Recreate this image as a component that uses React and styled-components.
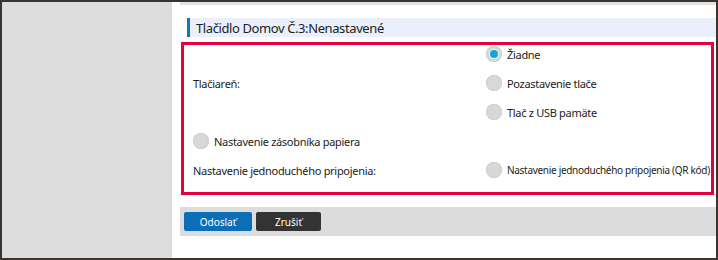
import React from "react";
import styled, { createGlobalStyle } from "styled-components";

const Global = createGlobalStyle`
  html, body { margin: 0; padding: 0; background: #fff; }
  body { font-family: "Noto Sans", "Open Sans", sans-serif; color: #222; }
  * { box-sizing: border-box; }
`;

const Frame = styled.div`
  width: 718px;
  height: 260px;
  border: 2px solid #3a3431;
  display: flex;
  overflow: hidden;
  background: #fff;
`;

const Sidebar = styled.div`
  width: 170px;
  flex: none;
  background: #dddddd;
`;

const Main = styled.div`
  flex: 1;
  display: flex;
  flex-direction: column;
  padding-left: 8px;
  min-width: 0;
`;

const TopStrip = styled.div`
  height: 3px;
  background: #e2e2e2;
`;

const TitleBar = styled.div`
  margin: 13px 0 0 7px;
  height: 19px;
  background: #e9f0fb;
  border-left: 3px solid #1b72b9;
  display: flex;
  align-items: center;
  padding-left: 6px;
  font-size: 13px;
  letter-spacing: -0.4px;
  color: #222;
  white-space: nowrap;
`;

const FormBox = styled.div`
  margin: 5px 2px 0 1px;
  height: 153px;
  border: 3px solid #e3003c;
  padding: 0 0 0 9px;
  display: grid;
  grid-template-columns: 293px 1fr;
  grid-auto-rows: 18px;
  row-gap: 11px;
  font-size: 11px;
  letter-spacing: -0.3px;
  color: #222;
  overflow: hidden;
`;

const Label = styled.div`
  grid-column: 1;
  grid-row: ${(p) => p.$row};
  display: flex;
  align-items: center;
  white-space: nowrap;
`;

const Option = styled.label`
  grid-column: ${(p) => p.$col};
  grid-row: ${(p) => p.$row};
  display: flex;
  align-items: center;
  gap: 5px;
  white-space: nowrap;
  font-size: ${(p) => (p.$small ? "10px" : "11px")};
`;

const Radio = styled.span`
  width: 16px;
  height: 16px;
  flex: none;
  border-radius: 50%;
  background: #d8d8d8;
  box-shadow: inset 0 0 0 1px #cfcfcf;
  display: flex;
  align-items: center;
  justify-content: center;
  &::after {
    content: "";
    display: ${(p) => (p.$checked ? "block" : "none")};
    width: 8px;
    height: 8px;
    border-radius: 50%;
    background: #12a7dc;
    box-shadow: 0 0 0 1px #eef3f6;
  }
`;

const ButtonBar = styled.div`
  margin-top: 12px;
  height: 29px;
  background: #dcdcdc;
  display: flex;
  align-items: center;
  gap: 4px;
  padding-left: 4px;
`;

const Button = styled.button`
  width: ${(p) => p.$w}px;
  height: 19px;
  border: none;
  border-radius: 2px;
  background: ${(p) => (p.$primary ? "#0b6eb6" : "#333333")};
  color: #fff;
  font-family: "Noto Sans", "Open Sans", sans-serif;
  font-size: 10px;
  padding: 0;
  cursor: pointer;
`;

export default function App() {
  return (
    <>
      <Global />
      <Frame>
        <Sidebar />
        <Main>
          <TopStrip />
          <TitleBar>Tlačidlo Domov Č.3:Nenastavené</TitleBar>
          <FormBox>
            <Label $row="2">Tlačiareň:</Label>
            <Option $col="2" $row="1">
              <Radio $checked />
              Žiadne
            </Option>
            <Option $col="2" $row="2">
              <Radio />
              Pozastavenie tlače
            </Option>
            <Option $col="2" $row="3">
              <Radio />
              Tlač z USB pamäte
            </Option>
            <Option $col="1" $row="4">
              <Radio />
              Nastavenie zásobníka papiera
            </Option>
            <Label $row="5">Nastavenie jednoduchého pripojenia:</Label>
            <Option $col="2" $row="5" $small>
              <Radio />
              Nastavenie jednoduchého pripojenia (QR kód)
            </Option>
          </FormBox>
          <ButtonBar>
            <Button $primary $w={68}>Odoslať</Button>
            <Button $w={65}>Zrušiť</Button>
          </ButtonBar>
        </Main>
      </Frame>
    </>
  );
}
